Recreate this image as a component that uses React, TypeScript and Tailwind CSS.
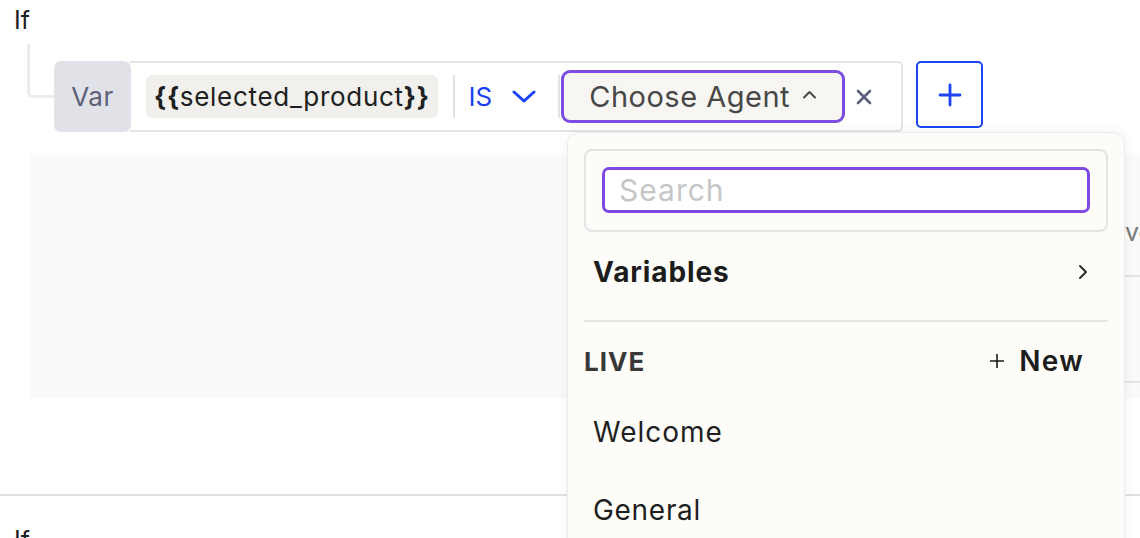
import React from "react";

export default function App() {
  return (
    <div className="relative w-[1140px] h-[538px] overflow-hidden bg-white text-[#1f1f1f]" style={{ fontFamily: "Inter, 'Noto Sans', sans-serif" }}>
      {/* first If block */}
      <div className="pl-[14px] pt-[4px] text-[25px] leading-[32px] text-[#1f2024]">If</div>
      <div className="flex items-start pl-[27px] mt-[8px]">
        <div className="w-[27px] h-[54px] border-l-[3px] border-b-[3px] border-[#ececee] rounded-bl-[6px] shrink-0" />
        <div className="flex mt-[17px] h-[71px]">
          <div className="w-[77px] h-full bg-[#e1e2e8] rounded-[7px] flex items-center justify-center text-[26px] tracking-[0.5px] text-[#5b6078]">Var</div>
          <div className="flex items-center h-full border-y-2 border-r-2 border-[#e3e3e8] rounded-r-[5px] pl-[16px] pr-[29px] -ml-[1px]">
            <div className="h-[43px] px-[8px] bg-[#f1f0ec] rounded-[6px] flex items-center text-[26px] tracking-[0.7px] text-[#202020]">
              <span className="font-bold">{"{{"}</span>
              <span>selected_product</span>
              <span className="font-bold">{"}}"}</span>
            </div>
            <div className="w-[2px] h-[43px] bg-[#e2e2e7] ml-[15px]" />
            <div className="flex items-center ml-[14px] text-[26px] text-[#1b3ff3]">
              <span>IS</span>
              <svg className="ml-[20px]" width="24" height="14" viewBox="0 0 24 14" fill="none">
                <path d="M2 2 L12 11 L22 2" stroke="#1b3ff3" strokeWidth="3" strokeLinecap="round" strokeLinejoin="round" />
              </svg>
            </div>
            <div className="w-[2px] h-[43px] bg-[#e2e2e7] ml-[22px]" />
            <div className="ml-[1px] h-[53px] w-[284px] shrink-0 border-[3px] border-[#7d4de3] rounded-[9px] bg-[#f7f6f2] flex items-center pl-[25px] text-[29px] tracking-[0.5px] text-[#474747]">
              <span>Choose Agent</span>
              <svg className="ml-[12px] mb-[4px]" width="15" height="9" viewBox="0 0 15 9" fill="none">
                <path d="M2 7.5 L7.5 2 L13 7.5" stroke="#474747" strokeWidth="2" strokeLinecap="round" strokeLinejoin="round" />
              </svg>
            </div>
            <svg className="ml-[11px]" width="16" height="16" viewBox="0 0 16 16" fill="none">
              <path d="M2 2 L14 14 M14 2 L2 14" stroke="#5a607c" strokeWidth="2.6" strokeLinecap="round" />
            </svg>
          </div>
        </div>
        <div className="ml-[13px] mt-[17px] w-[67px] h-[67px] border-2 border-[#1d45f3] rounded-[5px] flex items-center justify-center shrink-0">
          <svg width="24" height="24" viewBox="0 0 24 24" fill="none">
            <path d="M12 2 V22 M2 12 H22" stroke="#1d45f3" strokeWidth="2.8" strokeLinecap="round" />
          </svg>
        </div>
      </div>

      {/* gray area */}
      <div className="ml-[30px] mt-[23px] h-[243px] bg-[#fafafa] flex">
        <div className="ml-[1095px] flex flex-col w-[200px]">
          <div className="h-[120px] flex items-end pb-[24px] text-[25px] text-[#7a7a7a]">ve</div>
          <div className="h-[106px] border-t-2 border-[#e3e3e7]" />
          <div className="border-t-2 border-[#e3e3e7]" />
        </div>
      </div>

      <div className="mt-[96px] h-[2px] bg-[#e2e2e6]" />
      <div className="pl-[14px] pt-[28px] text-[25px] leading-[32px] text-[#1f2024]">If</div>

      {/* dropdown panel */}
      <div className="absolute left-[567px] top-[132px] w-[558px] h-[440px] bg-[#fdfcf8] border border-[#ebebed] rounded-[12px] shadow-[0_0_14px_rgba(0,0,0,0.06)] px-[16px] pt-[16px]">
        <div className="h-[83px] border-2 border-[#e4e4e6] rounded-[8px] p-[16px]">
          <div className="h-[46px] border-[3px] border-[#7f4ae3] rounded-[7px] bg-white flex items-center pl-[14px] text-[30px] tracking-[1px] text-[#c6c6c6]">Search</div>
        </div>
        <div className="h-[88px] flex items-center justify-between pl-[9px] pr-[20px] pb-[8px]">
          <span className="text-[28px] font-bold tracking-[0.9px] text-[#1c1c1c]">Variables</span>
          <svg width="10" height="16" viewBox="0 0 10 16" fill="none">
            <path d="M2 2 L8 8 L2 14" stroke="#2a2a2a" strokeWidth="2" strokeLinecap="round" strokeLinejoin="round" />
          </svg>
        </div>
        <div className="h-[2px] bg-[#e4e4e6]" />
        <div className="h-[78px] flex items-center justify-between pr-[24px]">
          <span className="text-[26px] font-bold tracking-[1px] text-[#383838]">LIVE</span>
          <div className="flex items-center text-[28px] text-[#1c1c1c]">
            <svg width="16" height="16" viewBox="0 0 16 16" fill="none">
              <path d="M8 1 V15 M1 8 H15" stroke="#1c1c1c" strokeWidth="1.6" />
            </svg>
            <span className="ml-[14px] font-semibold tracking-[1.3px]">New</span>
          </div>
        </div>
        <div className="-mt-[7px] flex flex-col">
          <div className="h-[78px] flex items-center pl-[9px] text-[28px] tracking-[1px] text-[#1f1f1f]">Welcome</div>
          <div className="h-[78px] flex items-center pl-[9px] text-[28px] tracking-[0.7px] text-[#1f1f1f]">General</div>
        </div>
      </div>
    </div>
  );
}
